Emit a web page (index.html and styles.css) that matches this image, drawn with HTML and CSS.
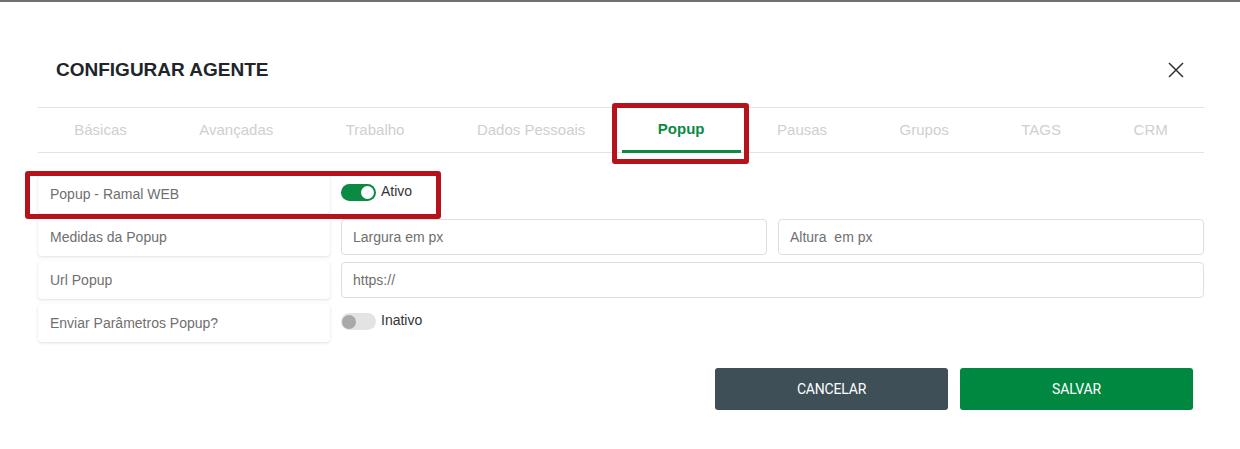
FILE: index.html
```html
<!DOCTYPE html>
<html lang="pt-BR">
<head>
<meta charset="utf-8">
<title>Configurar Agente</title>
<link rel="stylesheet" href="styles.css">
</head>
<body>
<div class="modal">
  <div class="modal-header">
    <h1 class="title">CONFIGURAR AGENTE</h1>
    <button class="close" aria-label="Fechar">
      <svg width="16" height="16" viewBox="0 0 16 16"><path d="M1 1 L15 15 M15 1 L1 15" stroke="#333" stroke-width="1.5" fill="none"/></svg>
    </button>
  </div>

  <nav class="tabs">
    <a class="tab">Básicas</a>
    <a class="tab">Avançadas</a>
    <a class="tab">Trabalho</a>
    <a class="tab">Dados Pessoais</a>
    <a class="tab active">Popup</a>
    <a class="tab">Pausas</a>
    <a class="tab">Grupos</a>
    <a class="tab">TAGS</a>
    <a class="tab">CRM</a>
  </nav>

  <div class="form">
    <div class="row">
      <div class="label-card">Popup - Ramal WEB</div>
      <div class="field">
        <span class="switch on"><span class="knob"></span></span>
        <span class="switch-text">Ativo</span>
      </div>
    </div>
    <div class="row">
      <div class="label-card">Medidas da Popup</div>
      <div class="field two">
        <div class="input">Largura em px</div>
        <div class="input">Altura&nbsp; em px</div>
      </div>
    </div>
    <div class="row">
      <div class="label-card">Url Popup</div>
      <div class="field">
        <div class="input full">https://</div>
      </div>
    </div>
    <div class="row">
      <div class="label-card">Enviar Parâmetros Popup?</div>
      <div class="field">
        <span class="switch off"><span class="knob"></span></span>
        <span class="switch-text">Inativo</span>
      </div>
    </div>
  </div>

  <div class="footer">
    <button class="btn cancel">CANCELAR</button>
    <button class="btn save">SALVAR</button>
  </div>

  <div class="highlight hl-tab"></div>
  <div class="highlight hl-row"></div>
</div>
</body>
</html>
```

FILE: styles.css
```css
html, body {
  margin: 0;
  padding: 0;
  background: #ffffff;
}

body {
  border-top: 2px solid #707070;
  font-family: "Liberation Sans", Arial, sans-serif;
  color: #333;
}

.modal {
  position: relative;
  width: 1240px;
  height: 447px;
}

.modal-header {
  display: flex;
  justify-content: space-between;
  align-items: center;
  padding: 56px 56px 25px 56px;
  height: 24px;
}

.title {
  margin: 0;
  font-size: 19px;
  line-height: 24px;
  font-weight: 700;
  color: #212529;
}

.close {
  border: 0;
  background: none;
  padding: 0;
  width: 16px;
  height: 16px;
  display: flex;
  cursor: pointer;
}

.tabs {
  display: flex;
  margin: 0 36px 0 38px;
  border-top: 1px solid #e3e3e3;
  border-bottom: 1px solid #e3e3e3;
  height: 44px;
}

.tab {
  flex: 1 1 auto;
  text-align: center;
  font-size: 15px;
  line-height: 44px;
  color: #cfcfcf;
  height: 44px;
  box-sizing: border-box;
}

.tab.active {
  color: #0a8a43;
  font-weight: 700;
  border-bottom: 3px solid #0a8a43;
  height: 45px;
  margin-bottom: -1px;
  line-height: 42px;
}

.form {
  display: flex;
  flex-direction: column;
  gap: 5px;
  padding: 22px 36px 0 38px;
}

.row {
  display: grid;
  grid-template-columns: 292px 1fr;
  column-gap: 11px;
  height: 38px;
}

.label-card {
  display: flex;
  align-items: center;
  padding-left: 12px;
  font-size: 14px;
  color: #6f6f6f;
  border-radius: 4px;
  background: #fff;
  box-shadow: 0 1px 3px rgba(0, 0, 0, 0.13);
}

.field {
  display: flex;
  align-items: center;
}

.field.two {
  display: grid;
  grid-template-columns: 1fr 1fr;
  column-gap: 11px;
  align-items: center;
}

.input {
  box-sizing: border-box;
  height: 36px;
  border: 1px solid #dedede;
  border-radius: 4px;
  padding-left: 11px;
  display: flex;
  align-items: center;
  font-size: 14px;
  color: #6f6f6f;
  background: #fff;
}

.input.full {
  width: 100%;
}

.switch {
  position: relative;
  width: 35px;
  height: 17px;
  border-radius: 9px;
  display: inline-block;
  margin-top: -3px;
}

.switch.on {
  background: #0a8a43;
}

.switch.off {
  background: #e3e3e3;
}

.switch .knob {
  position: absolute;
  top: 2px;
  width: 13px;
  height: 13px;
  border-radius: 50%;
}

.switch.on .knob {
  right: 2px;
  background: #fff;
}

.switch.off .knob {
  left: 1px;
  top: 1.5px;
  width: 14px;
  height: 14px;
  background: #a9a9a9;
}

.switch-text {
  margin-left: 5px;
  font-size: 14px;
  color: #333;
  margin-top: -7px;
}

.footer {
  display: flex;
  justify-content: flex-end;
  gap: 12px;
  padding: 26px 47px 0 0;
}

.btn {
  width: 233px;
  height: 42px;
  border: 0;
  border-radius: 3px;
  color: #fff;
  font-family: Roboto, "Liberation Sans", sans-serif;
  font-size: 14px;
  font-weight: 400;
  letter-spacing: -0.2px;
  cursor: pointer;
}

.btn.cancel {
  background: #3e4f57;
}

.btn.save {
  background: #008840;
}

.highlight {
  position: absolute;
  box-sizing: border-box;
  border: 5px solid #b5121b;
  border-radius: 3px;
  pointer-events: none;
}

.hl-tab {
  left: 612px;
  top: 101px;
  width: 137px;
  height: 61px;
}

.hl-row {
  left: 25px;
  top: 169px;
  width: 416px;
  height: 48px;
}
```
